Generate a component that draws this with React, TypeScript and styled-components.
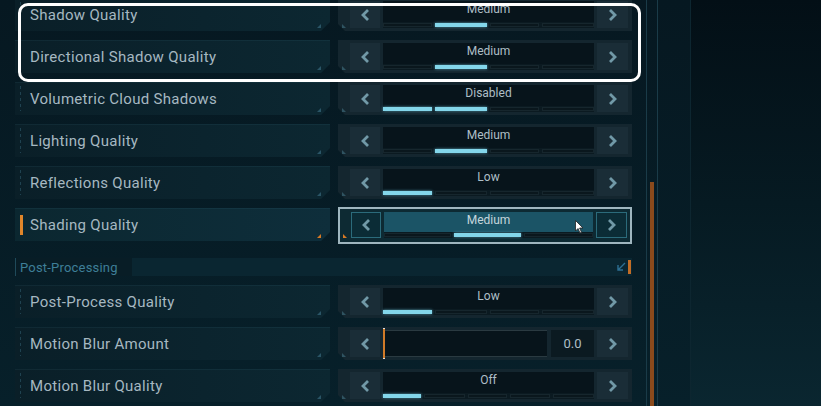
import styled, { createGlobalStyle, css } from "styled-components";

const Global = createGlobalStyle`
  html, body { margin: 0; padding: 0; background: #061620; }
  body { font-family: Roboto, "Liberation Sans", sans-serif; overflow: hidden; }
`;

type Setting = {
  label: string;
  value: string;
  segments: number[];
  level: [number, number];
  slider?: boolean;
  active?: boolean;
};

const top: Setting[] = [
  { label: "Shadow Quality", value: "Medium", segments: [49, 52, 50, 52], level: [1, 1] },
  { label: "Directional Shadow Quality", value: "Medium", segments: [49, 52, 50, 52], level: [1, 1] },
  { label: "Volumetric Cloud Shadows", value: "Disabled", segments: [49, 52, 50, 52], level: [0, 1] },
  { label: "Lighting Quality", value: "Medium", segments: [49, 52, 50, 52], level: [1, 1] },
  { label: "Reflections Quality", value: "Low", segments: [49, 52, 50, 52], level: [0, 0] },
  { label: "Shading Quality", value: "Medium", segments: [67, 67, 69], level: [1, 1], active: true },
];

const post: Setting[] = [
  { label: "Post-Process Quality", value: "Low", segments: [49, 52, 50, 52], level: [0, 0] },
  { label: "Motion Blur Amount", value: "0.0", segments: [], level: [0, 0], slider: true },
  { label: "Motion Blur Quality", value: "Off", segments: [37, 40, 39, 39, 40], level: [0, 0] },
];

const Page = styled.div`
  position: relative;
  display: flex;
  width: 821px;
  height: 406px;
  background: linear-gradient(180deg, #061821 0%, #07202a 100%);
  overflow: hidden;
`;

const List = styled.div`
  display: flex;
  flex-direction: column;
  gap: 9px;
  width: 617px;
  padding-left: 15px;
  margin-top: -2px;
  flex-shrink: 0;
`;

const Row = styled.div`
  display: grid;
  grid-template-columns: 315px 294px;
  column-gap: 8px;
  height: 33px;
`;

const Label = styled.div<{ $active?: boolean }>`
  position: relative;
  display: flex;
  align-items: center;
  padding-left: 15px;
  font-size: 15px;
  color: #a6b8c1;
  letter-spacing: 0.3px;
  background: linear-gradient(90deg, #0a1f28 0%, #0b242e 60%, #0c2731 100%);
  box-shadow: inset 0 1px 0 rgba(80, 140, 160, 0.1);
  clip-path: polygon(0 0, 100% 0, 100% calc(100% - 9px), calc(100% - 9px) 100%, 0 100%);
  ${(p) =>
    p.$active &&
    css`
      background: linear-gradient(90deg, #0b2730 0%, #0e2e3b 100%);
    `}
`;

const Tick = styled.span<{ $active?: boolean }>`
  position: absolute;
  left: 5px;
  top: 4px;
  bottom: 4px;
  width: 1px;
  background: repeating-linear-gradient(180deg, #1f4250 0 3px, transparent 3px 6px);
  ${(p) =>
    p.$active &&
    css`
      width: 3px;
      top: 7px;
      bottom: 6px;
      background: #e0862a;
    `}
`;

const Corner = styled.span<{ $active?: boolean }>`
  position: absolute;
  right: 9px;
  bottom: 3px;
  width: 4px;
  height: 4px;
  background: ${(p) => (p.$active ? "#d87a25" : "#2a5566")};
  clip-path: polygon(100% 0, 100% 100%, 0 100%);
`;

const Control = styled.div<{ $active?: boolean }>`
  position: relative;
  display: grid;
  grid-template-columns: 30px 1fr 31px;
  column-gap: 3px;
  padding: 3px 4px 3px 12px;
  background: #14262f;
  clip-path: polygon(0 0, 100% 0, 100% 100%, 7px 100%, 0 calc(100% - 7px));
  ${(p) =>
    p.$active &&
    css`
      margin: -1px 0 -3px;
      padding: 5px 5px 6px 13px;
      background: #0d2a33;
      clip-path: none;
      outline: 2px solid #9fb6bf;
      outline-offset: -2px;
    `}
`;

const CtrlCorner = styled.span<{ $active?: boolean }>`
  position: absolute;
  left: ${(p) => (p.$active ? "5px" : "4px")};
  bottom: ${(p) => (p.$active ? "6px" : "3px")};
  width: 4px;
  height: 4px;
  background: ${(p) => (p.$active ? "#d87a25" : "#2f5361")};
  clip-path: polygon(0 0, 100% 100%, 0 100%);
`;

const Arrow = styled.div<{ $active?: boolean }>`
  display: flex;
  align-items: center;
  justify-content: center;
  background: ${(p) => (p.$active ? "#0b2c36" : "#1a2d37")};
  ${(p) => p.$active && "box-shadow: inset 0 0 0 1px #2b6b7b;"}
  svg {
    width: 9px;
    height: 12px;
  }
`;

const Display = styled.div<{ $active?: boolean }>`
  display: flex;
  flex-direction: column;
  background: ${(p) => (p.$active ? "#1b5466" : "#07141b")};
`;

const Value = styled.div<{ $active?: boolean }>`
  flex: 1;
  display: flex;
  justify-content: center;
  padding-top: 1px;
  font-size: 12px;
  color: ${(p) => (p.$active ? "#c4d6dc" : "#aebfc6")};
`;

const Segments = styled.div`
  display: flex;
  gap: 3px;
  height: 5px;
  padding-top: 1px;
  background: #0b1a21;
`;

const Seg = styled.div<{ $on?: boolean }>`
  height: 4px;
  background: ${(p) => (p.$on ? "#83d6ea" : "#0a171d")};
  box-shadow: ${(p) => (p.$on ? "0 0 3px rgba(120, 210, 235, 0.7)" : "inset 0 0 0 1px #16262d")};
`;

const SliderTrack = styled.div`
  position: relative;
  display: grid;
  grid-template-columns: 1fr 43px;
  column-gap: 4px;
`;

const Bar = styled.div`
  position: relative;
  background: #07141b;
  border-top: 1px solid #2a3a41;
  border-bottom: 1px solid #2a3a41;
`;

const Knob = styled.span`
  position: absolute;
  left: 0;
  top: -2px;
  bottom: -2px;
  width: 2px;
  background: #d07a28;
  box-shadow: 0 -1px 0 #ddd, 0 1px 0 #ddd;
`;

const Num = styled.div`
  display: flex;
  align-items: center;
  justify-content: center;
  background: #0b1a21;
  font-size: 13px;
  color: #aebfc6;
`;

const Section = styled.div`
  position: relative;
  display: grid;
  grid-template-columns: 117px 1fr;
  height: 18px;
  margin: 8px 0 0;
  width: 617px;
`;

const SectionTitle = styled.div`
  display: flex;
  align-items: center;
  padding-left: 4px;
  font-size: 13px;
  color: #3e7f98;
  letter-spacing: 0.2px;
  border-left: 1px solid #1f4a5a;
  background: #081d26;
`;

const SectionBar = styled.div`
  display: flex;
  align-items: center;
  justify-content: flex-end;
  gap: 2px;
  padding-right: 1px;
  background: #0a2631;
`;

const SectionMark = styled.span`
  width: 3px;
  height: 14px;
  background: #c26d26;
`;

const Scroll = styled.div`
  position: relative;
  width: 10px;
  margin-left: 14px;
  border-left: 1px solid #1a3b48;
  border-right: 1px solid #1a3b48;
  flex-shrink: 0;
`;

const Thumb = styled.div`
  position: absolute;
  left: 3px;
  top: 182px;
  bottom: 0;
  width: 4px;
  background: #8a4a1c;
`;

const Side = styled.div`
  flex: 1;
  margin-left: 32px;
  border-left: 1px solid #0d2630;
  background: linear-gradient(180deg, #030f16 0%, #061a22 50%, #0a2630 100%);
`;

const Highlight = styled.div`
  position: absolute;
  left: 18px;
  top: 3px;
  width: 617px;
  height: 73px;
  border: 3px solid #ffffff;
  border-radius: 10px;
  pointer-events: none;
`;

const Cursor = styled.svg`
  position: absolute;
  left: 575px;
  top: 220px;
  width: 9px;
  height: 14px;
`;

function Chevron({ dir }: { dir: "l" | "r" }) {
  const d = dir === "l" ? "M7 1 L2 6 L7 11" : "M2 1 L7 6 L2 11";
  return (
    <svg viewBox="0 0 9 12">
      <path d={d} fill="none" stroke="#7199a7" strokeWidth="2.8" strokeLinejoin="miter" />
    </svg>
  );
}

function SettingRow({ s }: { s: Setting }) {
  return (
    <Row>
      <Label $active={s.active}>
        <Tick $active={s.active} />
        {s.label}
        <Corner $active={s.active} />
      </Label>
      <Control $active={s.active}>
        <CtrlCorner $active={s.active} />
        <Arrow $active={s.active}>
          <Chevron dir="l" />
        </Arrow>
        {s.slider ? (
          <SliderTrack>
            <Bar>
              <Knob />
            </Bar>
            <Num>{s.value}</Num>
          </SliderTrack>
        ) : (
          <Display $active={s.active}>
            <Value $active={s.active}>{s.value}</Value>
            <Segments>
              {s.segments.map((w, i) => (
                <Seg key={i} $on={i >= s.level[0] && i <= s.level[1]} style={{ flex: w }} />
              ))}
            </Segments>
          </Display>
        )}
        <Arrow $active={s.active}>
          <Chevron dir="r" />
        </Arrow>
      </Control>
    </Row>
  );
}

export default function App() {
  return (
    <>
      <Global />
      <Page>
        <List>
          {top.map((s) => (
            <SettingRow key={s.label} s={s} />
          ))}
          <Section>
            <SectionTitle>Post-Processing</SectionTitle>
            <SectionBar>
              <svg width="10" height="10" viewBox="0 0 10 10">
                <path d="M9 1 L2 8 M2 3 V8 H7" fill="none" stroke="#2d6f93" strokeWidth="1.4" />
              </svg>
              <SectionMark />
            </SectionBar>
          </Section>
          {post.map((s) => (
            <SettingRow key={s.label} s={s} />
          ))}
        </List>
        <Scroll>
          <Thumb />
        </Scroll>
        <Side />
        <Highlight />
        <Cursor viewBox="0 0 9 14">
          <path d="M0.5 0.5 L0.5 11 L3 8.5 L5 13 L6.5 12.3 L4.6 8 L8 8 Z" fill="#fff" stroke="#222" strokeWidth="0.8" />
        </Cursor>
      </Page>
    </>
  );
}
